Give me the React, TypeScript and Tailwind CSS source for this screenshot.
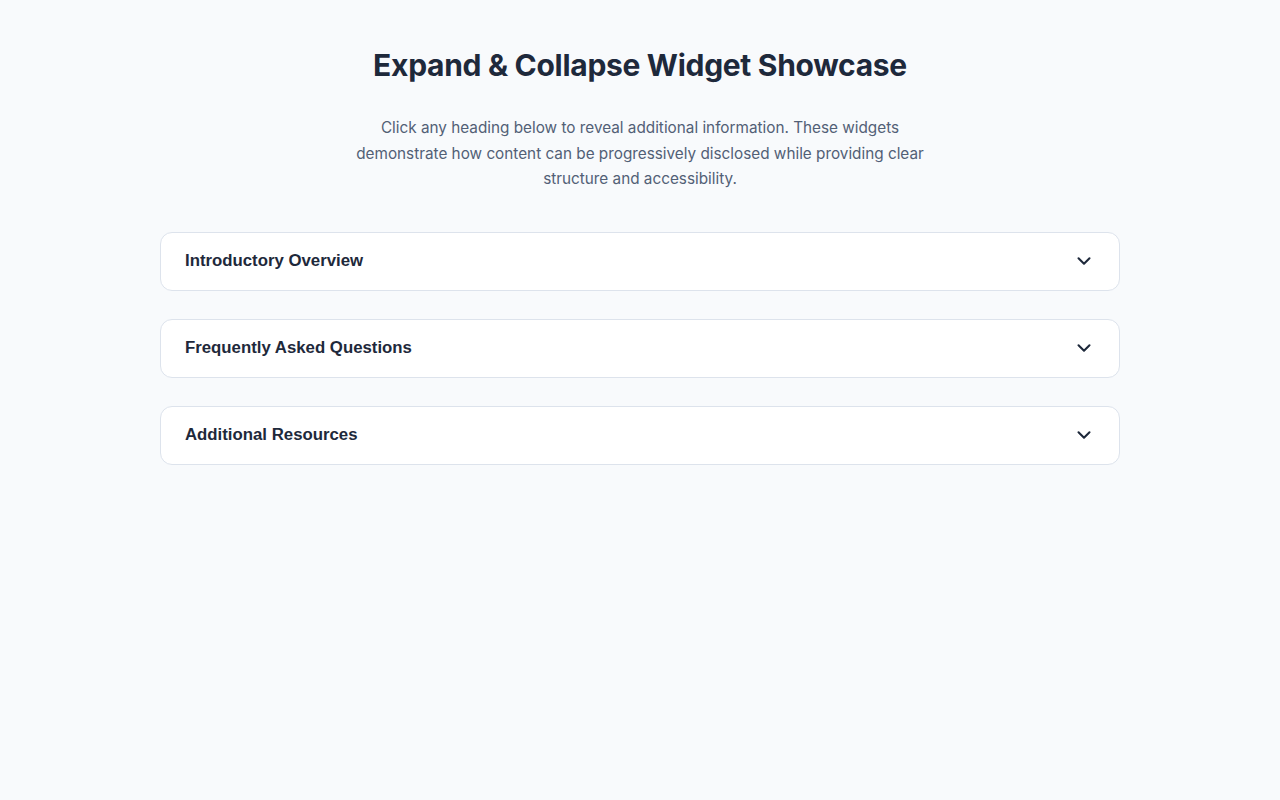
import { useState } from "react";
import { ChevronDown } from "lucide-react";

const sections = [
  {
    title: "Introductory Overview",
    body: "This section introduces the purpose of the widget and how it helps organise content into digestible pieces.",
  },
  {
    title: "Frequently Asked Questions",
    body: "Answers to common questions live here, hidden until a reader asks for them.",
  },
  {
    title: "Additional Resources",
    body: "Links and references for further reading can be tucked away in this panel.",
  },
];

export default function App() {
  const [open, setOpen] = useState<number | null>(null);

  return (
    <div className="min-h-screen bg-[#f8fafc] px-6 pt-[47px] pb-16 font-['Inter',sans-serif]">
      <div className="mx-auto max-w-[960px]">
        <h1 className="text-center text-[30px] font-bold leading-[36px] tracking-[-0.01em] text-[#1e293b]">
          Expand &amp; Collapse Widget Showcase
        </h1>
        <p className="mx-auto mt-[32px] max-w-[600px] text-center text-[15.3px] leading-[25.5px] text-[#526076]">
          Click any heading below to reveal additional information. These widgets demonstrate how content can be
          progressively disclosed while providing clear structure and accessibility.
        </p>

        <div className="mt-[40px] flex flex-col gap-[28px]">
          {sections.map((s, i) => (
            <div key={s.title} className="overflow-hidden rounded-xl border border-[#dde3ec] bg-white">
              <button
                type="button"
                onClick={() => setOpen(open === i ? null : i)}
                className="flex h-[57px] w-full items-center justify-between px-6 text-left"
              >
                <span className="font-['Liberation_Sans',Arial,sans-serif] text-[16.8px] font-bold leading-6 text-[#1e293b]">
                  {s.title}
                </span>
                <ChevronDown
                  size={22}
                  strokeWidth={2.25}
                  className={`text-[#1e293b] transition-transform ${open === i ? "rotate-180" : ""}`}
                />
              </button>
              {open === i && (
                <div className="px-6 pb-5 text-[15px] leading-relaxed text-[#526076]">{s.body}</div>
              )}
            </div>
          ))}
        </div>
      </div>
    </div>
  );
}
